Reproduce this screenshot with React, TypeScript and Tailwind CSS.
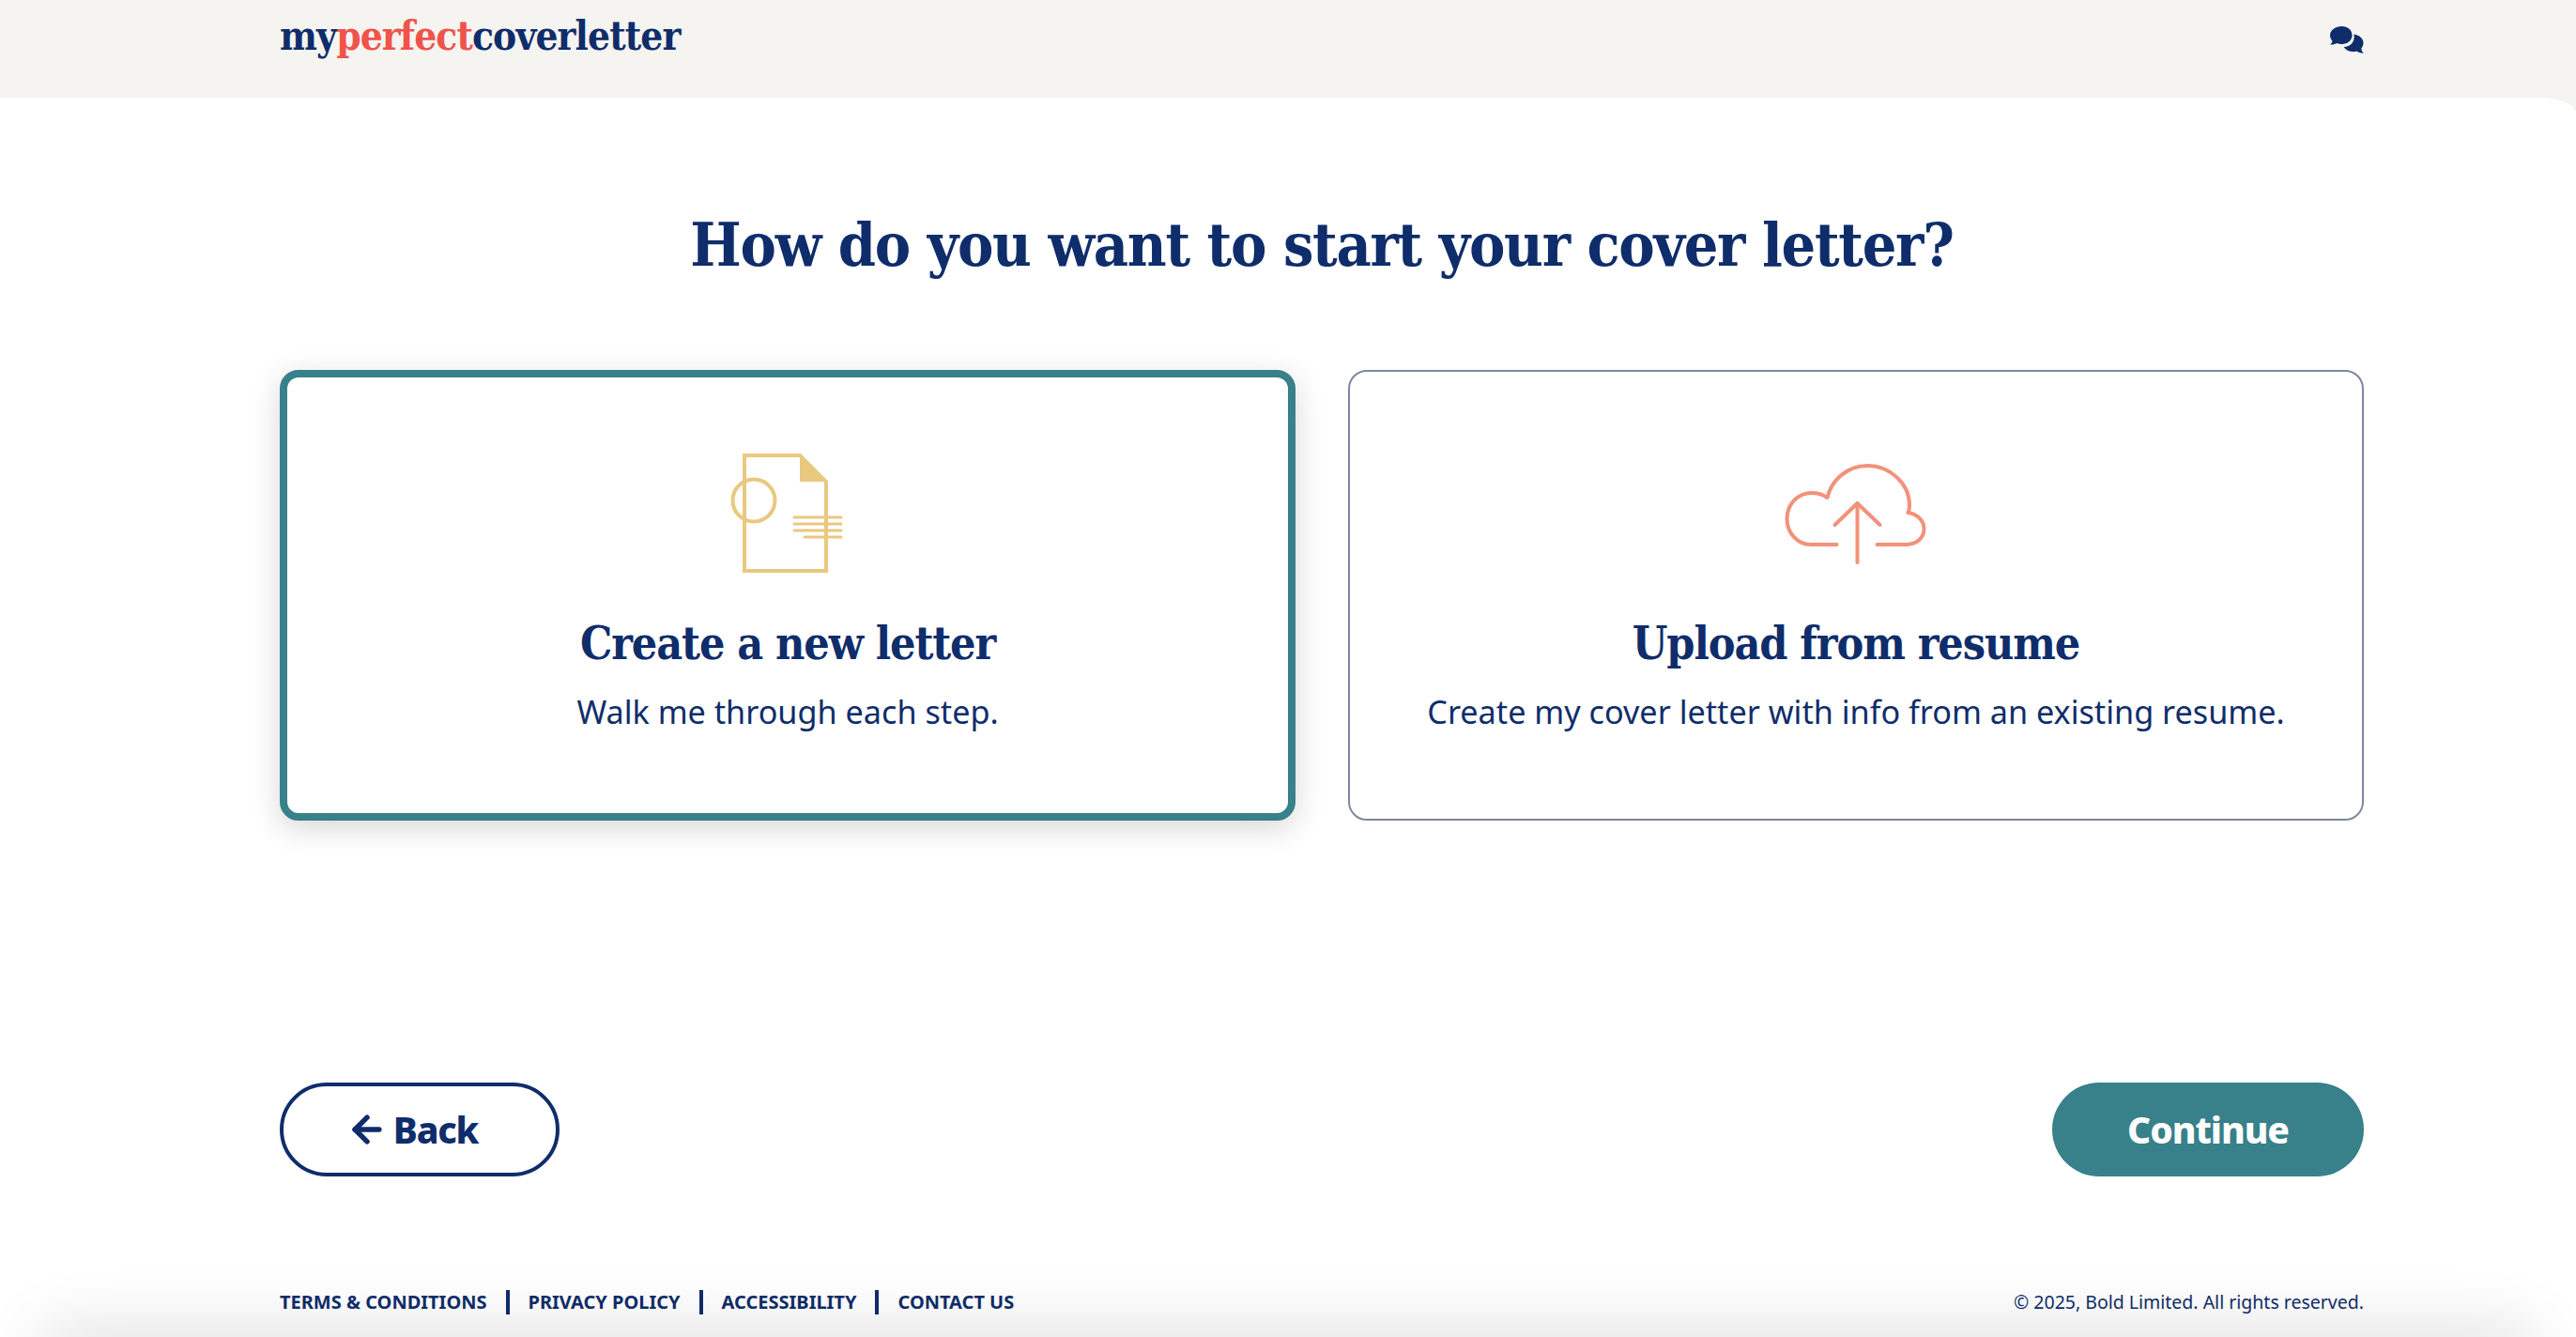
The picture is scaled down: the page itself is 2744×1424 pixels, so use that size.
import type { ReactNode } from "react";
import { ArrowLeft } from "lucide-react";

function ChatIcon() {
  return (
    <svg width="36" height="30" viewBox="0 0 36 30" fill="#0f2d6b">
      <path d="M12.500 0C18.800 0 23.500 4.100 23.500 9.500S18.800 19 12.500 19c-1.900 0-3.600-.4-5.100-1C5.500 19 2.900 19.800 0 19.500c1.400-1 2.200-2.300 2.400-4C1 13.900 0 11.800 0 9.500 0 4.100 6.200 0 12.500 0z" />
      <path d="M25.500 8.500c5.800.9 10 4.400 10 9.300 0 2.200-.8 4.100-2.200 5.600.2 1.900 1 3.500 2.500 5.100-2.900.1-5.400-.7-7.300-2.100-1.200.4-2.500.6-3.900.6-4.400 0-8.200-1.900-10-5 6.600-.3 12.300-4.700 10.900-13.500z" />
    </svg>
  );
}

function LetterIcon() {
  return (
    <svg width="124" height="128" viewBox="0 0 124 128" fill="none" stroke="#e9c87f" strokeWidth="4">
      <path d="M16 2h59l28 28v95H16z" />
      <path d="M75 2l28 28H75z" fill="#e9c87f" stroke="none" />
      <circle cx="26" cy="50" r="22.500" />
      <path d="M69 68h50M69 75h50M69 82h50M80 89h39" strokeWidth="3" strokeLinecap="round" />
    </svg>
  );
}

function CloudIcon() {
  return (
    <svg width="152" height="110" viewBox="0 0 152 110" fill="none" stroke="#f2917a" strokeWidth="4" strokeLinecap="round" strokeLinejoin="round">
      <path d="M55.500 88H28C13 88 2.500 75 2.500 60.500 2.500 45 14 33 29 33c6 0 12 2 16.500 5C50 19 67 4 88.500 4 112 4 133 23 133 46c0 3 0 5-1.500 8 9.500 1.500 17 8 17 17 0 9.500-7 17-20 17H98.500" />
      <path d="M53.500 67l24-23 24 23" />
      <path d="M77.500 44v63" />
    </svg>
  );
}

function Card({ selected, icon, title, text }: { selected?: boolean; icon: ReactNode; title: string; text: string }) {
  return (
    <div
      className={
        selected
          ? "flex h-[480px] flex-col items-center rounded-[20px] border-[8px] border-[#38808a] bg-white pt-[80px] shadow-[0_8px_32px_rgba(0,0,0,0.16)]"
          : "flex h-[480px] flex-col items-center rounded-[20px] border-2 border-[#7f86a0] bg-white pt-[86px]"
      }
    >
      <div className="flex h-[130px] items-center justify-center">{icon}</div>
      <h2 className="mt-[43px] font-['DejaVu_Serif'] text-[48px] leading-[60px] font-bold tracking-[-1.100px] font-stretch-condensed text-[#0f2d6b]">
        {title}
      </h2>
      <p className="mt-[19px] font-['Noto_Sans'] text-[34.200px] leading-[48px] text-[#0f2d6b]">{text}</p>
    </div>
  );
}

export default function App() {
  return (
    <div className="relative h-[1424px] w-[2744px] overflow-hidden bg-[#f5f4f0] font-['Noto_Sans'] text-[#0f2d6b]">
      <header className="flex h-[104px] items-start justify-between pr-[226px] pl-[298px]">
        <div className="mt-[6px] font-['DejaVu_Serif'] text-[42px] leading-[66px] font-bold tracking-[-0.900px] font-stretch-condensed">
          my<span className="text-[#f0534b]">perfect</span>coverletter
        </div>
        <div className="mt-[28px]">
          <ChatIcon />
        </div>
      </header>
      <main className="relative h-[1320px] rounded-tr-[40px_16px] bg-white pr-[226px] pl-[298px]">
        <h1 className="pt-[112px] text-center font-['DejaVu_Serif'] text-[64px] leading-[90px] font-bold tracking-[-1.250px] font-stretch-condensed">
          How do you want to start your cover letter?
        </h1>
        <div className="mt-[88px] grid grid-cols-2 gap-[56px]">
          <Card selected icon={<LetterIcon />} title="Create a new letter" text="Walk me through each step." />
          <Card icon={<CloudIcon />} title="Upload from resume" text="Create my cover letter with info from an existing resume." />
        </div>
        <div className="mt-[279px] flex items-center justify-between">
          <button className="flex h-[100px] w-[298px] items-center justify-center gap-[6px] rounded-full border-4 border-[#0f2d6b] bg-white pr-[16px] text-[39px] font-extrabold tracking-[-1.200px]">
            <ArrowLeft size={44} strokeWidth={3} />
            Back
          </button>
          <button className="flex h-[100px] w-[332px] items-center justify-center rounded-full bg-[#38808a] text-[39px] font-extrabold tracking-[-1px] text-white">
            Continue
          </button>
        </div>
        <footer className="mt-[119px] flex items-center justify-between">
          <div className="flex items-center text-[20px] font-bold">
            <span>TERMS &amp; CONDITIONS</span>
            <span className="mx-[20px] h-[26px] w-[4px] bg-[#0f2d6b]" />
            <span>PRIVACY POLICY</span>
            <span className="mx-[20px] h-[26px] w-[4px] bg-[#0f2d6b]" />
            <span>ACCESSIBILITY</span>
            <span className="mx-[20px] h-[26px] w-[4px] bg-[#0f2d6b]" />
            <span>CONTACT US</span>
          </div>
          <div className="text-[19.500px]">© 2025, Bold Limited. All rights reserved.</div>
        </footer>
      </main>
      <div className="pointer-events-none absolute right-[40px] -bottom-[30px] left-[40px] h-[30px] rounded-t-[60px] shadow-[0_0_70px_rgba(0,0,0,0.22)]" />
    </div>
  );
}
